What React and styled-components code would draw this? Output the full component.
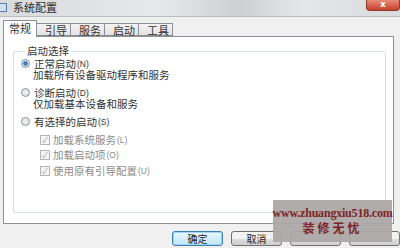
import React from 'react';
import styled, { createGlobalStyle } from 'styled-components';

const Global = createGlobalStyle`
  html, body { margin: 0; padding: 0; background: #f0f0f0; }
  body { font-family: "Noto Sans CJK SC", "Noto Sans", sans-serif; }
`;

const Window = styled.div`
  position: relative;
  width: 400px;
  height: 248px;
  overflow: hidden;
  background: #f0f0f0;
  display: flex;
  flex-direction: column;
`;

const TitleBar = styled.div`
  height: 16px;
  display: flex;
  align-items: flex-start;
  background: linear-gradient(90deg, #d8dadc 0%, #e6e8ea 40%, #cdd0d3 60%, #e4e6e8 75%, #d9dbdd 100%);
  border-bottom: 1px solid #b9bcc0;
`;

const TitleIcon = styled.div`
  width: 6px;
  height: 7px;
  margin: 3px 6px 0 0;
  border: 1px solid #5a7aa0;
  border-left: none;
  background: #cfe0f2;
`;

const TitleText = styled.span`
  font-size: 11px;
  line-height: 13px;
  padding-top: 1px;
  color: #2a2a2a;
`;

const CloseButton = styled.div`
  margin-left: auto;
  width: 32px;
  height: 10px;
  border-radius: 0 0 4px 4px;
  background: linear-gradient(#e88a78, #c8402c);
  border: 1px solid #8c3a2e;
  border-top: none;
  color: #fff;
  font-size: 9px;
  line-height: 9px;
  text-align: center;
  font-family: "DejaVu Sans", sans-serif;
  font-weight: bold;
`;

const Body = styled.div`
  padding: 3px 6px 0 3px;
  display: flex;
  flex-direction: column;
`;

const TabStrip = styled.div`
  display: flex;
  align-items: flex-end;
  height: 16px;
  position: relative;
  z-index: 1;
`;

const Tab = styled.div`
  width: 34px;
  height: ${p => (p.$active ? 17 : 13)}px;
  margin-bottom: ${p => (p.$active ? -1 : 0)}px;
  box-sizing: border-box;
  border: 1px solid #8d9096;
  border-bottom: ${p => (p.$active ? 'none' : '1px solid #8d9096')};
  border-left-width: ${p => (p.$active ? 1 : 0)}px;
  background: ${p => (p.$active ? '#fff' : 'linear-gradient(#f4f4f4, #e2e2e2)')};
  font-size: 11px;
  line-height: ${p => (p.$active ? 15 : 12)}px;
  padding-left: ${p => (p.$active ? 5 : 8)}px;
  color: #333;
`;

const Panel = styled.div`
  height: 188px;
  background: #fff;
  border: 1px solid #8d9096;
  box-sizing: border-box;
  padding: 8px 7px 0 9px;
`;

const Group = styled.fieldset`
  margin: 0;
  height: 168px;
  box-sizing: border-box;
  border: 1px solid #d5dfe5;
  border-radius: 2px;
  padding: 0 0 0 7px;
`;

const Legend = styled.legend`
  font-size: 10.5px;
  color: #333;
  padding: 0 2px;
  margin-left: 4px;
  line-height: 12px;
`;

const Option = styled.div`
  display: flex;
  align-items: center;
  height: 11px;
  margin-top: ${p => p.$gap || 0}px;
  margin-left: ${p => p.$indent || 0}px;
  font-size: 10.5px;
  color: ${p => (p.$disabled ? '#8a8a8a' : '#333')};
`;

const Hint = styled.div`
  font-size: 10.5px;
  line-height: 11px;
  height: 11px;
  color: #333;
  margin-left: 12px;
`;

const Radio = styled.span`
  width: 7px;
  height: 7px;
  border-radius: 50%;
  border: 1px solid #8a949c;
  background: radial-gradient(circle, ${p => (p.$checked ? '#3a7ec0 0 2px, #dfeaf5 2.5px' : '#f2f2f2 0, #dcdcdc 100%')});
  margin-right: 4px;
  flex: none;
`;

const Check = styled.span`
  width: 8px;
  height: 8px;
  border: 1px solid #b5b5b5;
  background: #f4f4f4;
  margin-right: 3px;
  flex: none;
  display: flex;
  align-items: center;
  justify-content: center;
  color: #a0a0a0;
  font-size: 8px;
  line-height: 8px;
`;

const Mnemonic = styled.span`
  font-size: 8.5px;
  margin-left: 1px;
  font-family: "Liberation Sans", sans-serif;
`;

const Footer = styled.div`
  display: flex;
  gap: 8px;
  padding: 7px 0 0 169px;
`;

const Button = styled.div`
  width: 51px;
  height: 15px;
  box-sizing: border-box;
  border: 1px solid ${p => (p.$default ? '#3c7fb1' : '#707070')};
  border-radius: 3px;
  background: ${p => (p.$default ? 'linear-gradient(#eaf6fd, #bee6fd)' : 'linear-gradient(#f2f2f2 50%, #dddddd 50%, #cfcfcf)')};
  box-shadow: ${p => (p.$default ? 'inset 0 0 0 1px #9fd6f7' : 'none')};
  font-size: 10px;
  line-height: 13px;
  text-align: center;
  color: #222;
  flex: none;
`;

const Watermark = styled.div`
  position: absolute;
  left: 273px;
  top: 200px;
  width: 119px;
  height: 42px;
  background: rgba(172, 168, 166, 0.95);
  display: flex;
  flex-direction: column;
  align-items: center;
  justify-content: center;
  color: #7c2424;
  font-family: "Liberation Serif", "Noto Sans CJK SC", serif;
`;

const WatermarkUrl = styled.div`
  font-size: 12px;
  font-weight: bold;
  line-height: 15px;
  letter-spacing: -0.2px;
`;

const WatermarkName = styled.div`
  font-size: 12px;
  font-weight: bold;
  line-height: 16px;
  letter-spacing: 3px;
`;

const tabs = ['常规', '引导', '服务', '启动', '工具'];

const checks = [
  ['加载系统服务', 'L', 7],
  ['加载启动项', 'O', 4],
  ['使用原有引导配置', 'U', 5],
];

export default function App() {
  return (
    <Window>
      <Global />
      <TitleBar>
        <TitleIcon />
        <TitleText>系统配置</TitleText>
        <CloseButton>x</CloseButton>
      </TitleBar>
      <Body>
        <TabStrip>
          {tabs.map((t, i) => (
            <Tab key={t} $active={i === 0}>{t}</Tab>
          ))}
        </TabStrip>
        <Panel>
          <Group>
            <Legend>启动选择</Legend>
            <Option $gap={1}><Radio $checked />正常启动<Mnemonic>(N)</Mnemonic></Option>
            <Hint>加载所有设备驱动程序和服务</Hint>
            <Option $gap={7}><Radio />诊断启动<Mnemonic>(D)</Mnemonic></Option>
            <Hint>仅加载基本设备和服务</Hint>
            <Option $gap={7}><Radio />有选择的启动<Mnemonic>(S)</Mnemonic></Option>
            {checks.map(([label, key, gap]) => (
              <Option key={key} $indent={19} $gap={gap} $disabled>
                <Check>✓</Check>{label}<Mnemonic>({key})</Mnemonic>
              </Option>
            ))}
          </Group>
        </Panel>
        <Footer>
          <Button $default>确定</Button>
          <Button>取消</Button>
          <Button />
          <Button />
        </Footer>
      </Body>
      <Watermark>
        <WatermarkUrl>www.zhuangxiu518.com</WatermarkUrl>
        <WatermarkName>装修无忧</WatermarkName>
      </Watermark>
    </Window>
  );
}
